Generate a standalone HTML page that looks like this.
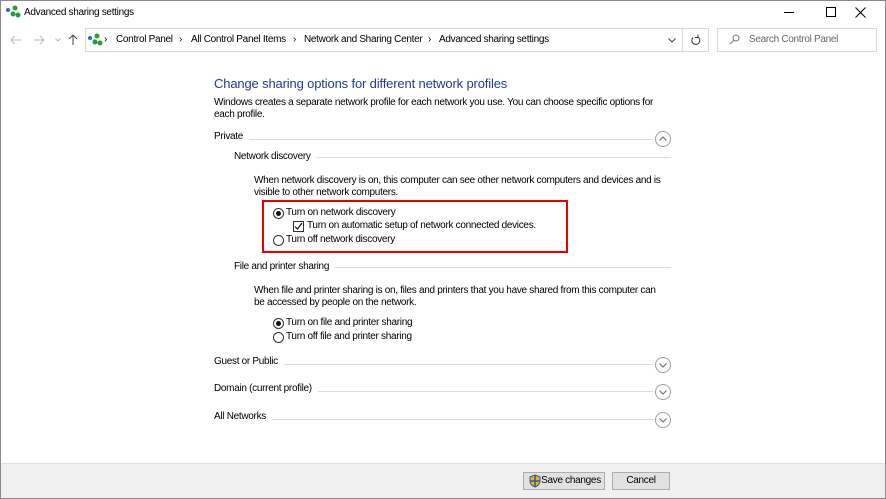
<!DOCTYPE html><html><head><style>
*{margin:0;padding:0;box-sizing:border-box}
body{width:886px;height:499px;overflow:hidden;background:#fff;font-family:"Liberation Sans",sans-serif;font-size:10px;letter-spacing:-0.3px;color:#000;position:relative}
.a{position:absolute;white-space:nowrap;line-height:14px}
.h{background:#fff;padding-right:6px;z-index:2}
.hl{position:absolute;height:1px;background:#dcdcdc}
.rad{position:absolute;width:11px;height:11px;border:1px solid #333;border-radius:50%;background:#fff}
.rad.on::after{content:"";position:absolute;left:2px;top:2px;width:5px;height:5px;border-radius:50%;background:#111}
.btn{position:absolute;height:18px;border:1px solid #adadad;background:#e1e1e1;text-align:center;line-height:16px;white-space:nowrap}
svg{position:absolute}
</style></head><body>
<div style="position:absolute;inset:0;border:1px solid #8a8a8a"></div>
<svg style="left:5px;top:5px" width="16" height="14"><circle cx="3" cy="5" r="2" fill="#1a6fd0"/><circle cx="10" cy="3" r="2.5" fill="#2a9a3a"/><circle cx="8" cy="9" r="2.5" fill="#2a9a3a"/><circle cx="13" cy="10" r="2.5" fill="#2a9a3a"/></svg>
<div class="a" style="left:24px;top:6px">Advanced sharing settings</div>
<div style="position:absolute;left:784px;top:12px;width:10px;height:1px;background:#000"></div>
<div style="position:absolute;left:826px;top:7px;width:10px;height:10px;border:1px solid #000"></div>
<svg style="left:855px;top:7px" width="11" height="11"><path d="M0.5 0.5L10.5 10.5M10.5 0.5L0.5 10.5" stroke="#000"/></svg>
<svg style="left:10px;top:35px" width="12" height="10"><path d="M1 5H11M1 5L5 1M1 5L5 9" stroke="#bbb" fill="none"/></svg>
<svg style="left:33px;top:35px" width="12" height="10"><path d="M1 5H11M11 5L7 1M11 5L7 9" stroke="#bbb" fill="none"/></svg>
<svg style="left:55px;top:38px" width="6" height="4"><path d="M0.5 0.5L3 3L5.5 0.5" stroke="#bbb" fill="none"/></svg>
<svg style="left:68px;top:34px" width="10" height="12"><path d="M5 11V1M5 1L1 5M5 1L9 5" stroke="#444" fill="none"/></svg>
<div style="position:absolute;left:85px;top:28px;width:598px;height:24px;border:1px solid #d9d9d9"></div>
<div style="position:absolute;left:682px;top:28px;width:27px;height:24px;border:1px solid #d9d9d9"></div>
<div style="position:absolute;left:717px;top:28px;width:160px;height:24px;border:1px solid #d9d9d9"></div>
<svg style="left:87px;top:33px" width="16" height="14"><circle cx="3" cy="5" r="2" fill="#1a6fd0"/><circle cx="10" cy="3" r="2.5" fill="#2a9a3a"/><circle cx="8" cy="9" r="2.5" fill="#2a9a3a"/><circle cx="13" cy="10" r="2.5" fill="#2a9a3a"/></svg>
<div class="a" style="left:104px;top:33px">›</div>
<div class="a" style="left:116px;top:33px">Control Panel</div>
<div class="a" style="left:179px;top:33px">›</div>
<div class="a" style="left:191px;top:33px">All Control Panel Items</div>
<div class="a" style="left:293px;top:33px">›</div>
<div class="a" style="left:304px;top:33px">Network and Sharing Center</div>
<div class="a" style="left:428px;top:33px">›</div>
<div class="a" style="left:439px;top:33px">Advanced sharing settings</div>
<svg style="left:668px;top:38px" width="8" height="5"><path d="M0.5 0.5L4 4L7.5 0.5" stroke="#444" fill="none"/></svg>
<svg style="left:690px;top:34px" width="11" height="12"><path d="M8 3A4 4 0 1 1 3 3.5" stroke="#333" fill="none"/><path d="M8 0.5V3.5H5" stroke="#333" fill="none"/></svg>
<svg style="left:729px;top:34px" width="11" height="11"><circle cx="7" cy="4" r="3" stroke="#777" fill="none"/><path d="M5 6L1 10" stroke="#777"/></svg>
<div class="a" style="left:749px;top:33px;color:#666">Search Control Panel</div>

<div class="a" style="left:214px;top:75px;font-size:13px;letter-spacing:-0.15px;line-height:18px;color:#1e3f96">Change sharing options for different network profiles</div>
<div class="a" style="left:214px;top:96px">Windows creates a separate network profile for each network you use. You can choose specific options for</div>
<div class="a" style="left:214px;top:108px">each profile.</div>

<div class="hl" style="left:214px;top:139px;width:440px"></div><div class="a h" style="left:214px;top:130px">Private</div>
<svg style="left:655px;top:131px" width="16" height="16"><circle cx="8" cy="8" r="7.5" stroke="#a0a0a0" fill="#fff"/><path d="M4.5 9.5L8 6L11.5 9.5" stroke="#666" fill="none"/></svg>
<div class="hl" style="left:234px;top:157px;width:437px"></div><div class="a h" style="left:234px;top:150px">Network discovery</div>
<div class="a" style="left:254px;top:174px">When network discovery is on, this computer can see other network computers and devices and is</div>
<div class="a" style="left:254px;top:186px">visible to other network computers.</div>
<div style="position:absolute;left:262px;top:200px;width:306px;height:53px;border:2px solid #e60000"></div>
<div class="rad on" style="left:273px;top:208px"></div><div class="a" style="left:286px;top:206px">Turn on network discovery</div>
<div style="position:absolute;left:293px;top:221px;width:11px;height:11px;border:1px solid #333"></div><svg style="left:294px;top:222px" width="9" height="9"><path d="M1 4.5L3.5 7L8 1" stroke="#111" fill="none" stroke-width="1.2"/></svg><div class="a" style="left:307px;top:219px">Turn on automatic setup of network connected devices.</div>
<div class="rad" style="left:273px;top:235px"></div><div class="a" style="left:286px;top:233px">Turn off network discovery</div>

<div class="hl" style="left:234px;top:267px;width:437px"></div><div class="a h" style="left:234px;top:260px">File and printer sharing</div>
<div class="a" style="left:254px;top:284px">When file and printer sharing is on, files and printers that you have shared from this computer can</div>
<div class="a" style="left:254px;top:296px">be accessed by people on the network.</div>
<div class="rad on" style="left:273px;top:318px"></div><div class="a" style="left:286px;top:316px">Turn on file and printer sharing</div>
<div class="rad" style="left:273px;top:332px"></div><div class="a" style="left:286px;top:330px">Turn off file and printer sharing</div>

<div class="hl" style="left:214px;top:364px;width:440px"></div><div class="a h" style="left:214px;top:355px">Guest or Public</div>
<svg style="left:655px;top:357px" width="16" height="16"><circle cx="8" cy="8" r="7.5" stroke="#a0a0a0" fill="#fff"/><path d="M4.5 6.5L8 10L11.5 6.5" stroke="#666" fill="none"/></svg>
<div class="hl" style="left:214px;top:391px;width:440px"></div><div class="a h" style="left:214px;top:382px">Domain (current profile)</div>
<svg style="left:655px;top:384px" width="16" height="16"><circle cx="8" cy="8" r="7.5" stroke="#a0a0a0" fill="#fff"/><path d="M4.5 6.5L8 10L11.5 6.5" stroke="#666" fill="none"/></svg>
<div class="hl" style="left:214px;top:419px;width:440px"></div><div class="a h" style="left:214px;top:410px">All Networks</div>
<svg style="left:655px;top:412px" width="16" height="16"><circle cx="8" cy="8" r="7.5" stroke="#a0a0a0" fill="#fff"/><path d="M4.5 6.5L8 10L11.5 6.5" stroke="#666" fill="none"/></svg>

<div style="position:absolute;left:1px;right:1px;top:463px;bottom:1px;background:#f0f0f0;border-top:1px solid #dfdfdf"></div>
<div class="btn" style="left:523px;top:472px;width:82px"><svg style="left:5px;top:1px" width="12" height="14"><path d="M6 1 L11 3 L11 7 Q11 11 6 13 Q1 11 1 7 L1 3Z" fill="#f2b600" stroke="#2a58b0"/><path d="M6 1 L6 13 M1 7 L11 7" stroke="#2a58b0" stroke-width="1.5"/></svg><span style="margin-left:14px">Save changes</span></div>
<div class="btn" style="left:612px;top:472px;width:58px">Cancel</div>
</body></html>
